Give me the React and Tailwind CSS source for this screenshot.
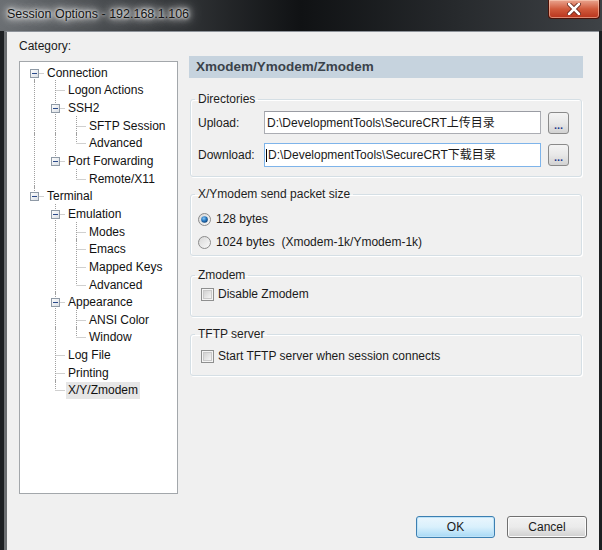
import React from "react";

const tree = [
    {
        label: "Connection", children: [
            { label: "Logon Actions" },
            { label: "SSH2", children: [{ label: "SFTP Session" }, { label: "Advanced" }] },
            { label: "Port Forwarding", children: [{ label: "Remote/X11" }] },
        ]
    },
    {
        label: "Terminal", children: [
            { label: "Emulation", children: [{ label: "Modes" }, { label: "Emacs" }, { label: "Mapped Keys" }, { label: "Advanced" }] },
            { label: "Appearance", children: [{ label: "ANSI Color" }, { label: "Window" }] },
            { label: "Log File" },
            { label: "Printing" },
            { label: "X/Y/Zmodem", selected: true },
        ]
    },
];

// flatten the tree so every row knows which guide lines to draw
function flatten(nodes, level = 0, guides = [], out = []) {
    nodes.forEach((node, i) => {
        const isLast = i === nodes.length - 1;
        out.push({
            label: node.label,
            selected: node.selected,
            level,
            guides,
            isLast,
            isFirstRoot: level === 0 && i === 0,
            hasChildren: !!node.children,
        });
        if (node.children) flatten(node.children, level + 1, guides.concat(!isLast), out);
    });
    return out;
}

const rows = flatten(tree);
const DOT = "#a0a0a0";

function TreeRow({ row }) {
    const w = (row.level + 1) * 21;
    const cx = row.level * 21 + 10.5;
    return (
        <div className="h-[17.65px] flex items-center">
            <svg width={w} height="18" className="shrink-0 overflow-visible">
                {row.guides.map((g, j) => g && (
                    <line key={j} x1={j * 21 + 10.5} y1="-1" x2={j * 21 + 10.5} y2="19" stroke={DOT} strokeDasharray="1 1" />
                ))}
                {!row.isFirstRoot && <line x1={cx} y1="-1" x2={cx} y2="9" stroke={DOT} strokeDasharray="1 1" />}
                {!row.isLast && <line x1={cx} y1="9" x2={cx} y2="19" stroke={DOT} strokeDasharray="1 1" />}
                <line x1={cx} y1="9.5" x2={cx + 10} y2="9.5" stroke={DOT} strokeDasharray="1 1" />
                {row.hasChildren && (
                    <g>
                        <defs>
                            <linearGradient id="tbox" x1="0" y1="0" x2="1" y2="1">
                                <stop offset="0" stopColor="#ffffff" />
                                <stop offset="1" stopColor="#d8dde3" />
                            </linearGradient>
                        </defs>
                        <rect x={cx - 4} y="5.5" width="8" height="8" fill="url(#tbox)" stroke="#8f9aa6" />
                        <line x1={cx - 2.5} y1="9.5" x2={cx + 2.5} y2="9.5" stroke="#2b4a8a" />
                    </g>
                )}
            </svg>
            <span className={`h-[17px] flex items-center px-[2px] whitespace-nowrap ${row.selected ? "bg-[#e6e6e6]" : ""}`}>
                {row.label}
            </span>
        </div>
    );
}

function Radio({ checked }) {
    return (
        <svg width="13" height="13" className="shrink-0">
            <defs>
                <linearGradient id="rbg" x1="0" y1="0" x2="1" y2="1">
                    <stop offset="0" stopColor="#d6d6d6" />
                    <stop offset="1" stopColor="#fbfbfb" />
                </linearGradient>
                <radialGradient id="rdot" cx="0.4" cy="0.35" r="0.7">
                    <stop offset="0" stopColor="#8cc8f5" />
                    <stop offset="0.5" stopColor="#2a7cc4" />
                    <stop offset="1" stopColor="#0c3c72" />
                </radialGradient>
            </defs>
            <circle cx="6.5" cy="6.5" r="6" fill="url(#rbg)" stroke="#8b8b8b" />
            {checked && <circle cx="6.5" cy="6.5" r="3.3" fill="url(#rdot)" />}
        </svg>
    );
}

function Checkbox() {
    return (
        <svg width="13" height="13" className="shrink-0">
            <defs>
                <linearGradient id="cbg" x1="0" y1="0" x2="1" y2="1">
                    <stop offset="0" stopColor="#cfcfcf" />
                    <stop offset="1" stopColor="#f7f7f7" />
                </linearGradient>
            </defs>
            <rect x="0.5" y="0.5" width="12" height="12" fill="#f4f4f4" stroke="#8e8f8f" />
            <rect x="2.5" y="2.5" width="8" height="8" fill="url(#cbg)" stroke="#c9c9c9" />
        </svg>
    );
}

function Group({ title, className, children }) {
    return (
        <fieldset className={`ml-[1px] w-[392px] border border-[#d5dfe5] rounded-[3px] shadow-[1px_1px_0_#fff,inset_1px_1px_0_#fff] ${className}`}>
            <legend className="ml-[4px] px-[3px] leading-[14px] text-[#1e1e1e]">{title}</legend>
            {children}
        </fieldset>
    );
}

function DotsButton() {
    return (
        <button type="button" className="w-[21px] h-[22px] ml-[7px] rounded-[3px] border border-[#8a8a8a] bg-gradient-to-b from-[#f4f4f4] via-[#e8e8e8] to-[#d2d2d2] flex items-end justify-center pb-[3px] text-[#233a8e] text-[11px] font-bold leading-[10px]">
            ...
        </button>
    );
}

export default function App() {
    return (
        <div className="w-[602px] h-[550px] overflow-hidden bg-[#1c1f22] flex flex-col font-['Liberation_Sans','Noto_Sans_CJK_SC',sans-serif] text-[12px] text-[#1a1a1a]">

            {/* Title bar */}
            <div className="h-[31px] shrink-0 flex items-start justify-between bg-gradient-to-r from-[#6a6e72] via-[#101214] to-[#3e4246]">
                <div className="pl-[7px] pt-[6px] text-[12.5px] text-[#151515] leading-[16px] [text-shadow:0_0_6px_#fff,0_0_10px_#fff,0_0_16px_#fff,0_0_3px_#fff]">
                    Session Options - 192.168.1.106
                </div>
                <div className="w-[52px] h-[19px] mr-[2px] rounded-b-[4px] border border-t-0 border-[#4a1208] bg-gradient-to-b from-[#e9a48f] via-[#d05a3c] to-[#b8321b] shadow-[inset_0_0_0_1px_rgba(255,220,200,0.5)] flex items-center justify-center">
                    <svg width="14" height="12" viewBox="0 0 14 12">
                        <path d="M2 1 L12 11 M12 1 L2 11" stroke="#5a1a10" strokeWidth="4.2" strokeLinecap="round" />
                        <path d="M2 1 L12 11 M12 1 L2 11" stroke="#ffffff" strokeWidth="2.6" strokeLinecap="round" />
                    </svg>
                </div>
            </div>

            {/* Window frame */}
            <div className="flex-1 flex pl-[4px] pr-[3px]">
                <div className="flex-1 flex flex-col border-l-[3px] border-l-[#6b6e71] border-t border-t-[#8d9299] bg-[#f0f0f0]">

                    <div className="flex pt-[7px] pl-[12px]">

                        {/* Category tree */}
                        <div className="w-[159px] shrink-0">
                            <div className="h-[22px] leading-[14px]">Category:</div>
                            <div className="h-[433px] border border-[#a3a7ab] bg-white pl-[4px] pt-[2px] text-[#111]">
                                {rows.map((row, i) => <TreeRow key={i} row={row} />)}
                            </div>
                        </div>

                        {/* Page */}
                        <div className="ml-[11px] w-[394px] pt-[17px]">
                            <div className="h-[22px] bg-[#c6d3de] pl-[7px] flex items-center text-[13.5px] font-bold text-[#3b434b]">
                                Xmodem/Ymodem/Zmodem
                            </div>

                            <Group title="Directories" className="mt-[14px] pb-[9px]">
                                <div className="mt-[5px] h-[23px] flex items-center pl-[7px]">
                                    <span className="w-[66px] shrink-0">Upload:</span>
                                    <div className="w-[277px] h-[23px] border border-[#abadb3] border-t-[#9a9ca3] bg-white flex items-center pl-[2px] whitespace-nowrap">
                                        D:\DevelopmentTools\SecureCRT上传目录
                                    </div>
                                    <DotsButton />
                                </div>
                                <div className="mt-[9px] h-[24px] flex items-center pl-[7px]">
                                    <span className="w-[66px] shrink-0">Download:</span>
                                    <div className="w-[277px] h-[24px] border border-[#7eb4ea] bg-white flex items-center pl-[1px] whitespace-nowrap">
                                        <span className="w-[1px] h-[13px] bg-black mr-[1px]"></span>
                                        D:\DevelopmentTools\SecureCRT下载目录
                                    </div>
                                    <DotsButton />
                                </div>
                            </Group>

                            <Group title="X/Ymodem send packet size" className="mt-[10px] pb-[4px]">
                                <div className="mt-[9px] h-[18px] flex items-center pl-[7px] gap-[5px]">
                                    <Radio checked />
                                    <span>128 bytes</span>
                                </div>
                                <div className="mt-[5px] h-[18px] flex items-center pl-[7px] gap-[5px]">
                                    <Radio />
                                    <span className="whitespace-pre">1024 bytes  (Xmodem-1k/Ymodem-1k)</span>
                                </div>
                            </Group>

                            <Group title="Zmodem" className="mt-[12px] pb-[14px]">
                                <div className="mt-[4px] h-[16px] flex items-center pl-[10px] gap-[4px]">
                                    <Checkbox />
                                    <span>Disable Zmodem</span>
                                </div>
                            </Group>

                            <Group title="TFTP server" className="mt-[10px] pb-[11px]">
                                <div className="mt-[7px] h-[16px] flex items-center pl-[10px] gap-[4px]">
                                    <Checkbox />
                                    <span>Start TFTP server when session connects</span>
                                </div>
                            </Group>
                        </div>
                    </div>

                    {/* Buttons */}
                    <div className="mt-[22px] flex justify-end gap-[12px] pr-[12px]">
                        <button type="button" className="w-[79px] h-[22px] rounded-[3px] border border-[#3c7fb1] bg-gradient-to-b from-[#eaf6fd] via-[#d9f0fc] to-[#a7d9f5] shadow-[inset_0_0_0_1px_#bfe3f8]">
                            OK
                        </button>
                        <button type="button" className="w-[80px] h-[22px] rounded-[3px] border border-[#707070] bg-gradient-to-b from-[#f2f2f2] via-[#ebebeb] to-[#cfcfcf] shadow-[inset_0_0_0_1px_#fcfcfc]">
                            Cancel
                        </button>
                    </div>
                </div>
            </div>
        </div>
    );
}
